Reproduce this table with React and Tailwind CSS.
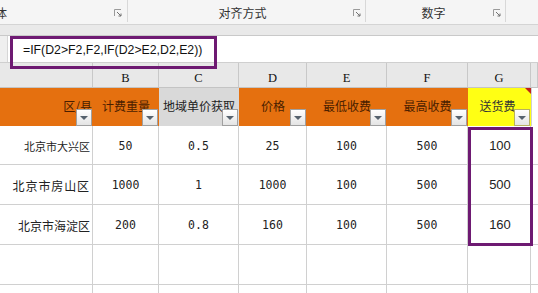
import React from "react";

const CJK = "font-['Noto_Sans_CJK_SC',sans-serif]";
const MONO = "font-['DejaVu_Sans_Mono',monospace]";

function Expander() {
  return (
    <svg width="8" height="8" viewBox="0 0 8 8" className="shrink-0">
      <path d="M0.5 7V0.5H7" fill="none" stroke="#9a9a9a" strokeWidth="1" />
      <path d="M3 3L7 7M7 4.5V7H4.5" fill="none" stroke="#707070" strokeWidth="1" />
    </svg>
  );
}

function FilterBtn({ yellow }) {
  return (
    <div
      className={`absolute right-[1px] bottom-0 w-[16px] h-[17px] border flex items-center justify-center bg-gradient-to-b from-white to-[#e4e4e4] ${
        yellow ? "border-[#b8b060]" : "border-[#a0a0a0]"
      }`}
    >
      <svg width="8" height="4" viewBox="0 0 8 4">
        <path d="M0 0H8L4 4Z" fill="#56626e" />
      </svg>
    </div>
  );
}

const rows = [
  { a: "北京市大兴区", aCls: "text-[11px]", v: ["50", "0.5", "25", "100", "500"], g: "100", h: "h-[39px]" },
  { a: "北京市房山区", aCls: "text-[12px] tracking-[0.9px]", v: ["1000", "1", "1000", "100", "500"], g: "500", h: "h-[40px]" },
  { a: "北京市海淀区", aCls: "text-[12px]", v: ["200", "0.8", "160", "100", "500"], g: "160", h: "h-[40px]" },
];

const GRID = "grid grid-cols-[93px_66px_80px_68px_80px_81px_63px_1fr]";

export default function App() {
  return (
    <div className="relative w-[538px] h-[293px] overflow-hidden bg-white text-[#222]">
      {/* Ribbon group labels */}
      <div className={`h-[25px] flex bg-[#f5f5f5] border-b border-[#d4d4d4] ${CJK} text-[12px] text-[#333]`}>
        <div className="w-[128px] flex items-center border-r border-[#d8d8d8] pr-[5px] pt-[3px] mb-[2px]">
          <span className="ml-[-5px]">体</span>
          <div className="flex-1" />
          <Expander />
        </div>
        <div className="w-[238px] flex items-center border-r border-[#d8d8d8] pr-[4px] pt-[3px] mb-[2px]">
          <span className="flex-1 text-center pl-[4px]">对齐方式</span>
          <Expander />
        </div>
        <div className="w-[140px] flex items-center border-r border-[#d8d8d8] pr-[4px] pt-[3px] mb-[2px]">
          <span className="flex-1 text-center pl-[8px]">数字</span>
          <Expander />
        </div>
        <div className="flex-1" />
      </div>
      {/* grey band */}
      <div className="h-[11px] bg-[#e9e9e9] border-b border-[#c9c9c9]" />
      {/* formula bar */}
      <div className="h-[27px] flex border-b border-[#cfcfcf]">
        <div className="w-[8px] bg-[#efefef] border-r border-[#d6d6d6]" />
        <div className="flex-1 flex items-center pl-[15px] pt-[2px] font-['Liberation_Sans',sans-serif] text-[12.3px] text-[#111]">
          =IF(D2&gt;F2,F2,IF(D2&gt;E2,D2,E2))
        </div>
      </div>
      {/* column letters */}
      <div className={`${GRID} h-[25px] bg-[#e8e8e8] border-b border-[#c4c4c4] font-['Liberation_Serif',serif] text-[12.5px] leading-none text-[#111]`}>
        {["", "B", "C", "D", "E", "F", "G", ""].map((l, i) => (
          <div key={i} className="flex items-end justify-center pb-[3px] border-r border-[#c8c8c8]">
            {l}
          </div>
        ))}
      </div>
      {/* header row */}
      <div className={`${GRID} h-[38px] ${CJK} text-[12px] text-[#4a1e00]`}>
        <div className="relative bg-[#e5700f] flex items-center justify-end pr-[1px] pb-[3px]">
          区/县
          <FilterBtn />
        </div>
        <div className="relative bg-[#e5700f] flex items-center justify-center pb-[3px]">
          计费重量
          <FilterBtn />
        </div>
        <div className="relative bg-[#d9d9d9] flex items-center justify-center pb-[3px] text-[#222] whitespace-nowrap">
          地域单价获取
          <FilterBtn />
        </div>
        <div className="relative bg-[#e5700f] flex items-center justify-center pb-[3px]">
          价格
          <FilterBtn />
        </div>
        <div className="relative bg-[#e5700f] flex items-center justify-center pb-[3px]">
          最低收费
          <FilterBtn />
        </div>
        <div className="relative bg-[#e5700f] flex items-center justify-center pb-[3px]">
          最高收费
          <FilterBtn />
        </div>
        <div className="relative bg-[#ffff14] flex items-center justify-center pb-[3px] pr-[4px] text-[#333]">
          送货费
          <div className="absolute top-0 right-0 w-0 h-0 border-t-[6px] border-l-[6px] border-t-[#c0201a] border-l-transparent" />
          <FilterBtn yellow />
        </div>
        <div className="bg-white border-l border-[#d0d0d0]" />
      </div>
      {/* data rows */}
      {rows.map((r, i) => (
        <div key={i} className={`${GRID} ${r.h} border-b border-[#d0d0d0] text-[#222]`}>
          <div className={`flex items-center justify-end pr-[2px] pt-[2px] border-r border-[#d0d0d0] ${CJK} ${r.aCls}`}>
            {r.a}
          </div>
          {r.v.map((v, j) => (
            <div key={j} className={`flex items-center justify-center pt-[3px] border-r border-[#d0d0d0] ${MONO} text-[11.5px]`}>
              {v}
            </div>
          ))}
          <div className="flex items-center justify-center pt-[1px] pl-[2px] border-r border-[#d0d0d0] font-['Liberation_Sans',sans-serif] text-[13px]">
            {r.g}
          </div>
          <div />
        </div>
      ))}
      <div className={`${GRID} h-[40px] border-b border-[#d0d0d0]`}>
        {Array.from({ length: 7 }).map((_, j) => (
          <div key={j} className="border-r border-[#d0d0d0]" />
        ))}
        <div />
      </div>
      <div className={`${GRID} h-[20px]`}>
        {Array.from({ length: 7 }).map((_, j) => (
          <div key={j} className="border-r border-[#d0d0d0]" />
        ))}
        <div />
      </div>

      {/* annotation overlays */}
      <div className="absolute left-[10px] top-[36px] w-[207px] h-[33px] border-[3px] border-[#6e1a72]" />
      <div className="absolute left-[468px] top-[127px] w-[65px] h-[119px] border-[3px] border-[#6e1a72]" />
    </div>
  );
}
